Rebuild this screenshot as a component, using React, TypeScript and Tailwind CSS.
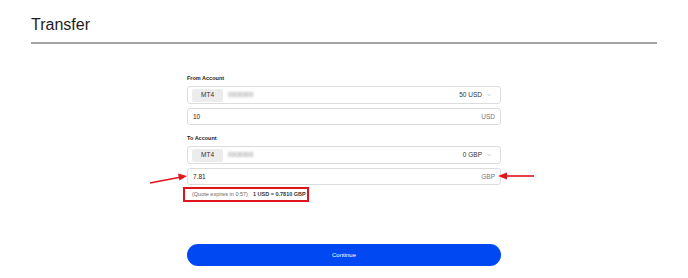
import { ChevronDown } from 'lucide-react';

const AccountSelect = ({ number, balance }: { number: string; balance: string }) => {
  return (
    <div className="flex h-[18px] items-center rounded-[3px] border border-[#dcdcdc] pl-[4px] pr-[8px]">
      <div className="flex h-[13px] w-[31px] items-center justify-center rounded-[2px] bg-[#ececec] text-[6.5px] text-[#333]">
        MT4
      </div>
      <span className="ml-[5px] text-[6.5px] text-[#8a8a8a] blur-[1px]">{number}</span>
      <span className="ml-auto text-[6.5px] text-[#333]">{balance}</span>
      <ChevronDown className="ml-[4px] h-[6px] w-[6px] text-[#999]" strokeWidth={2} />
    </div>
  );
};

const AmountInput = ({ value, currency }: { value: string; currency: string }) => {
  return (
    <div className="flex h-[17px] items-center rounded-[3px] border border-[#dcdcdc] px-[5px]">
      <span className="text-[6.5px] text-[#222]">{value}</span>
      <span className="ml-auto text-[6.5px] text-[#777]">{currency}</span>
    </div>
  );
};

const App = () => {
  return (
    <div className="relative h-[278px] w-full overflow-hidden bg-white font-['Liberation_Sans',Arial,sans-serif] text-[#222]">
      <div className="px-[31px] pt-[15px]">
        <h1 className="border-b-2 border-[#a3a3a3] pb-[7px] text-[16px] leading-[20px] text-[#1e1e1e]">
          Transfer
        </h1>
      </div>

      <div className="mx-auto mt-[30px] w-[314px]">
        <div className="text-[5.5px] font-bold leading-[8px] text-[#222]">From Account</div>
        <div className="mt-[4px] flex flex-col gap-[4px]">
          <AccountSelect number="0000000" balance="50 USD" />
          <AmountInput value="10" currency="USD" />
        </div>

        <div className="mt-[9px] text-[5.5px] font-bold leading-[8px] text-[#222]">To Account</div>
        <div className="mt-[4px] flex flex-col gap-[4px]">
          <AccountSelect number="0000000" balance="0 GBP" />
          <AmountInput value="7.81" currency="GBP" />
        </div>

        <div className="-ml-[4px] mt-[2px] flex h-[15px] w-[126px] items-center gap-[5px] border-2 border-[#e0141c] pl-[7px] text-[5.5px]">
          <span className="text-[#666]">(Quote expires in 0:57)</span>
          <span className="font-bold text-[#333]">1 USD = 0.7810 GBP</span>
        </div>

        <button className="mt-[42px] flex h-[22px] w-full items-center justify-center rounded-full bg-[#0049f2] text-[6px] text-white">
          Continue
        </button>
      </div>

      <svg className="pointer-events-none absolute left-0 top-0" width="688" height="278">
        <line x1="150" y1="183" x2="180" y2="177.2" stroke="#e0141c" strokeWidth="1.6" />
        <polygon points="187,176 178,173.5 179.5,180.5" fill="#e0141c" />
        <line x1="534" y1="176" x2="506" y2="176" stroke="#e0141c" strokeWidth="1.6" />
        <polygon points="498,176 507,172.5 507,179.5" fill="#e0141c" />
      </svg>
    </div>
  );
};

export default App;
